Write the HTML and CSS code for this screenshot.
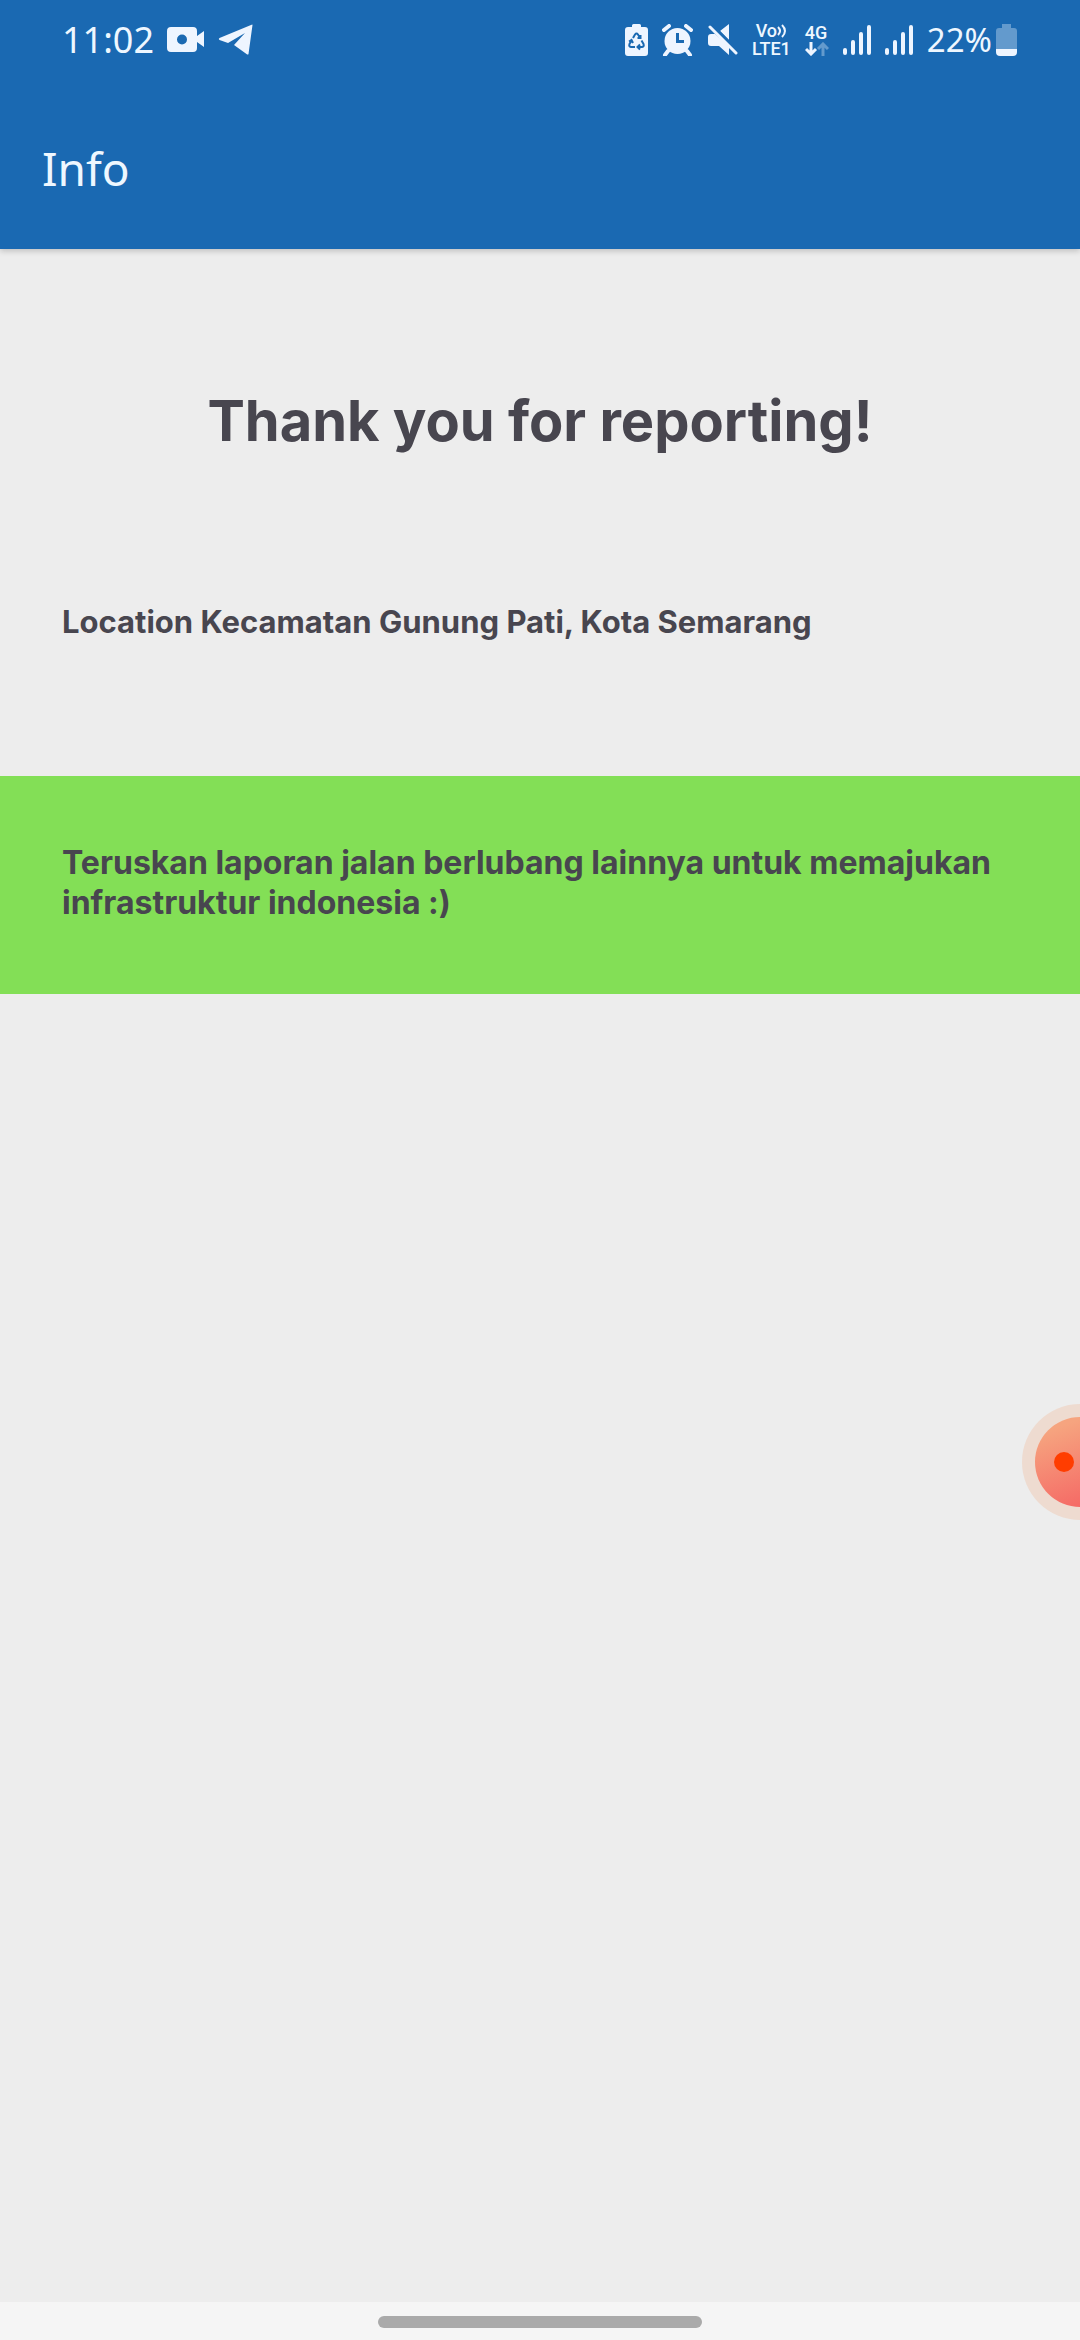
FILE: index.html
```html
<!DOCTYPE html>
<html lang="id">
<head>
<meta charset="utf-8">
<meta name="viewport" content="width=device-width, initial-scale=1">
<title>Info</title>
<link rel="stylesheet" href="styles.css">
</head>
<body>
<div class="screen">
  <header class="top">
    <div class="status">
      <div class="status-left">
        <time class="clock">11:02</time>
        <svg width="38" height="28" viewBox="0 0 38 28" aria-hidden="true">
          <path fill-rule="evenodd" d="M4 1H26Q30 1 30 5V10L37 5V21L30 16V22Q30 26 26 26H4Q0 26 0 22V5Q0 1 4 1ZM15 8.500A5 5 0 1 0 15 18.500A5 5 0 1 0 15 8.500Z"/>
        </svg>
        <svg width="36" height="32" viewBox="0 0 36 32" aria-hidden="true">
          <path d="M34.500 1L30.500 30Q30 31 28.500 30L16 21L27 9L10 19L1.500 16Q0 15 1.500 14L33 1Q34.500 0 34.500 1Z"/>
        </svg>
      </div>
      <div class="status-right">
        <svg width="23" height="32" viewBox="0 0 23 32" aria-hidden="true">
          <path d="M7 3V1.500Q7 0 8.500 0H14.500Q16 0 16 1.500V3H20Q23 3 23 6V29Q23 32 20 32H3Q0 32 0 29V6Q0 3 3 3Z"/>
          <path class="cut" d="M8 14L10 10.500Q11.500 8.500 13 10.500L15 14M16.500 16.500L18.500 20Q19.500 22.500 17 23H13.500M10 23H6Q3.500 22.500 4.500 20L6.500 16.500M12.500 14H15.500V11M15 20.500L12.500 23L15 25.500M4 17.500L6.500 16L8 19"/>
        </svg>
        <svg width="31" height="32" viewBox="0 0 31 32" aria-hidden="true">
          <circle cx="15.500" cy="17" r="13"/>
          <path class="line" d="M2 6L7 2M29 6L24 2M6 27L3 31M25 27L28 31"/>
          <path class="cut thick" d="M15.500 9V17.500H22"/>
        </svg>
        <svg width="31" height="32" viewBox="0 0 31 32" aria-hidden="true">
          <path d="M4 10H8L22 22V31L12 22H4Q1 22 1 19V13Q1 10 4 10ZM13 7L22 0V16Z"/>
          <path class="cut thick" d="M6 2L30 26"/>
          <path class="line slash" d="M3 3L29 29"/>
        </svg>
        <span class="mini">
          <span class="volte">Vo<svg width="10" height="14" viewBox="0 0 10 14" aria-hidden="true"><path class="line thin" d="M1 3Q5 7 1 11M5 1Q11 7 5 13"/></svg></span>
          <span>LTE1</span>
        </span>
        <span class="mini">
          <span>4G</span>
          <svg width="24" height="14" viewBox="0 0 24 14" aria-hidden="true"><path class="line thin" d="M6 0V12M1 7L6 12L11 7"/><path class="line thin dim" d="M18 14V2M13 7L18 2L23 7"/></svg>
        </span>
        <svg width="28" height="32" viewBox="0 0 28 32" aria-hidden="true"><path class="line" d="M2 26V29M10 18V29M18 10V29M26 3V29"/></svg>
        <svg width="28" height="32" viewBox="0 0 28 32" aria-hidden="true"><path class="line" d="M2 26V29M10 18V29M18 10V29M26 3V29"/></svg>
        <span class="level">22%<svg width="21" height="32" viewBox="0 0 21 32" aria-hidden="true"><path class="dim" d="M6 4V0H15V4H18Q21 4 21 7V25H0V7Q0 4 3 4Z"/><path d="M0 25H21V28Q21 32 17 32H4Q0 32 0 28Z"/></svg></span>
      </div>
    </div>
    <div class="title">Info</div>
  </header>
  <main class="content">
    <h1 class="thanks">Thank you for reporting!</h1>
    <p class="location">Location Kecamatan Gunung Pati, Kota Semarang</p>
    <p class="notice">Teruskan laporan jalan berlubang lainnya untuk memajukan infrastruktur indonesia :)</p>
  </main>
  <footer class="nav"><div class="pill"></div></footer>
</div>
<button class="recorder" aria-label="Rekam layar"><span class="disc"><span class="dot"></span></span></button>
</body>
</html>
```
FILE: styles.css
```css
* { box-sizing: border-box; }
body {
  margin: 0;
  background: #ededed;
  color: #48464f;
  font-family: Inter, "Open Sans", sans-serif;
}
.screen { min-height: 100vh; display: flex; flex-direction: column; }

.top {
  background: #1a69b2;
  color: #eef7ff;
  font-family: "Noto Sans", sans-serif;
  box-shadow: 0 2px 6px rgba(0, 0, 0, .2);
}
.status {
  display: flex;
  align-items: center;
  justify-content: space-between;
  height: 80px;
  padding: 0 63px 0 62px;
}
.status-left, .status-right, .level, .volte { display: flex; align-items: center; }
.status-left { gap: 13px; }
.status-right { gap: 14px; }
.clock { font-size: 36px; line-height: 40px; }
.level { font-size: 33px; line-height: 40px; gap: 4px; }
svg { display: block; flex: none; fill: #eef5ff; }
.line { fill: none; stroke: #eef5ff; stroke-width: 4; stroke-linecap: round; }
.line.slash { stroke-width: 3; }
.line.thin { stroke-width: 3; stroke-linecap: butt; }
.volte .line.thin { stroke-width: 2; }
.cut { fill: none; stroke: #1a69b2; stroke-width: 2; }
.thick { stroke-width: 3; }
.dim { opacity: .35; }
.mini {
  display: flex;
  flex-direction: column;
  font: 500 18px/18px Roboto, sans-serif;
}
.volte { justify-content: center; }
.title {
  height: 169px;
  padding: 58px 42px 0;
  font-size: 46px;
  line-height: 60px;
}

.content { flex: 1; }
h1, p { margin: 0; font-weight: 700; }
.thanks {
  padding-top: 136px;
  font-size: 56px;
  line-height: 72px;
  text-align: center;
}
.location {
  padding: 145px 62px 134px;
  font-size: 31px;
  line-height: 40px;
}
.notice {
  padding: 67px 62px 71px;
  background: #83df56;
  font-size: 32px;
  line-height: 40px;
}
.nav {
  display: flex;
  justify-content: center;
  height: 38px;
  padding-top: 14px;
  background: #f5f5f5;
}
.pill { width: 30%; height: 12px; border-radius: 6px; background: #aaa; }

.recorder {
  position: fixed;
  top: 60%;
  right: -58px;
  width: 116px;
  height: 116px;
  padding: 13px;
  border: 0;
  border-radius: 50%;
  background: #eedbd0;
}
.disc {
  display: flex;
  align-items: center;
  height: 90px;
  padding-left: 19px;
  border-radius: 50%;
  background: linear-gradient(160deg, #f6a47f 15%, #f56b66 85%);
}
.dot { width: 20px; height: 20px; border-radius: 50%; background: #ff3d00; }
```
